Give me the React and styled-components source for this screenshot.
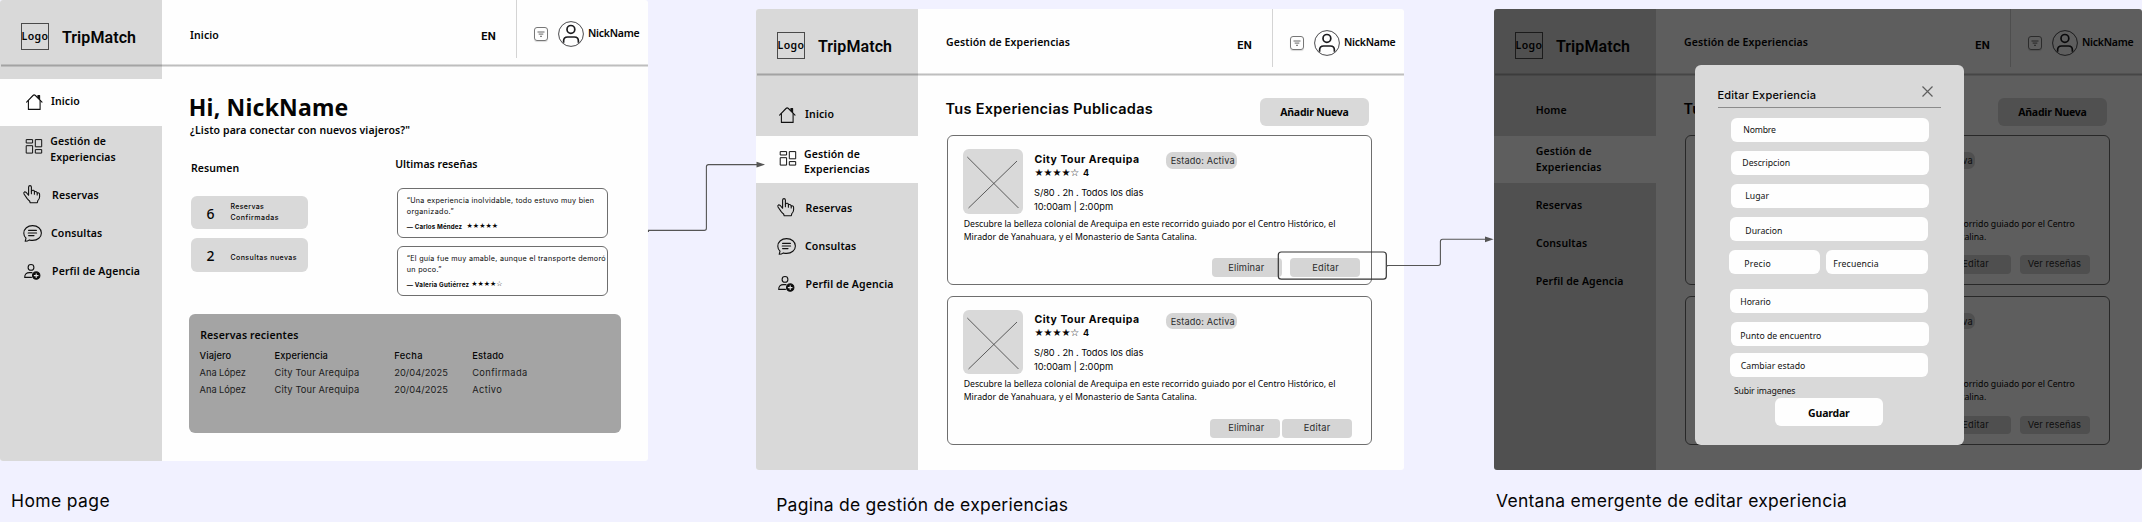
import React from "react";
import styled, { createGlobalStyle } from "styled-components";

const Global = createGlobalStyle`
  body { margin: 0; background: #f1f1ff; }
  * { box-sizing: border-box; }
`;

/* ---------- typography ---------- */
const Text = styled.div`
  flex: none;
  white-space: pre;
  color: ${(p) => p.$color || "#050505"};
  font-size: ${(p) => p.$size}px;
  font-weight: ${(p) => p.$weight || 400};
  line-height: ${(p) => p.$lh || 12}px;
  letter-spacing: ${(p) => p.$ls || 0}px;
  margin-top: ${(p) => p.$mt || 0}px;
  margin-left: ${(p) => p.$ml || 0}px;
  width: ${(p) => (p.$width ? p.$width + "px" : "auto")};
`;
const Humanist = styled(Text)`
  font-family: "Noto Sans", sans-serif;
`;
const Label = styled(Humanist).attrs({ $size: 10.5, $weight: 600 })``;
const Geo = styled(Text)`
  font-family: Inter, sans-serif;
`;
const Wordmark = styled(Text)`
  font-family: Roboto, sans-serif;
`;
const Stars = styled(Text)`
  font-family: "DejaVu Sans", sans-serif;
`;

/* ---------- board ---------- */
const Board = styled.main`
  position: relative;
  display: flex;
  width: 2142px;
  height: 522px;
  overflow: hidden;
  background: #f1f1ff;
`;
const Screen = styled.section`
  flex: none;
  width: 648px;
  margin-right: ${(p) => p.$gap || 0}px;
  padding-top: ${(p) => p.$top || 0}px;
`;
const Frame = styled.div`
  position: relative;
  display: flex;
  flex-direction: column;
  height: 461px;
  overflow: hidden;
  border-radius: 3px;
  background: #fefefe;
`;

/* ---------- top bar ---------- */
const TopBar = styled.header`
  position: relative;
  display: flex;
  flex: none;
  height: 67px;
  &::after {
    content: "";
    position: absolute;
    left: 1px;
    right: 0;
    bottom: 0;
    height: 3px;
    background: linear-gradient(rgba(0, 0, 0, 0.13) 33%, rgba(0, 0, 0, 0.25) 33% 66%, rgba(0, 0, 0, 0.13) 66%);
  }
`;
const Brand = styled.div`
  display: flex;
  flex: none;
  align-items: flex-start;
  width: 162.3px;
  background: #d9d9d9;
`;
const LogoBox = styled.div`
  display: flex;
  justify-content: center;
  width: 28px;
  height: 27px;
  margin: 23px 0 0 21px;
  border: 1px solid #4a4a4a;
`;
const Header = styled.div`
  display: flex;
  flex: 1;
  align-items: flex-start;
`;
const Divider = styled.div`
  width: 1px;
  height: 58px;
  background: #d4d4d4;
`;
const FilterButton = styled.div`
  display: flex;
  width: 14px;
  height: 14px;
  margin: 27px 0 0 17px;
  border: 1px solid #777;
  border-radius: 3px;
  box-shadow: 0 1px 1px rgba(0, 0, 0, 0.15);
`;
const AvatarSlot = styled.div`
  width: 26px;
  height: 26px;
  margin: 21px 0 0 10px;
`;

/* ---------- sidebar ---------- */
const Body = styled.div`
  display: flex;
  flex: 1;
`;
const Sidebar = styled.nav`
  flex: none;
  width: 162.3px;
  padding-top: ${(p) => p.$top || 0}px;
  background: #d9d9d9;
`;
const NavItem = styled.div`
  display: flex;
  align-items: flex-start;
  height: ${(p) => p.$h}px;
  background: ${(p) => (p.$active ? "#fefefe" : "transparent")};
`;
const IconSlot = styled.div`
  flex: none;
  width: 40px;
  padding: ${(p) => p.$top}px 0 0 ${(p) => p.$left}px;
  svg {
    display: block;
    overflow: visible;
  }
`;
const Content = styled.div`
  display: flex;
  flex: 1;
  flex-direction: column;
  align-items: flex-start;
`;

/* ---------- home ---------- */
const Split = styled.div`
  display: flex;
`;
const Column = styled.div`
  flex: none;
  width: ${(p) => p.$w}px;
  padding-top: ${(p) => p.$top}px;
`;
const StatCard = styled.div`
  display: flex;
  align-items: flex-start;
  width: 117.5px;
  height: 33.5px;
  margin-top: ${(p) => p.$mt}px;
  border-radius: 6px;
  background: #d9d9d9;
`;
const ReviewCard = styled.div`
  width: 211px;
  height: 49.5px;
  margin: ${(p) => p.$mt}px 0 0 1.6px;
  padding: 5.5px 0 0 9px;
  border: 1px solid #6e6e6e;
  border-radius: 6px;
`;
const Author = styled.div`
  display: flex;
  margin-top: 5.7px;
`;
const Panel = styled.div`
  width: 432.2px;
  height: 119px;
  margin: 18.3px 0 0 26.7px;
  padding-top: 15.2px;
  border-radius: 6px;
  background: #a4a4a4;
`;
const Table = styled.div`
  display: grid;
  grid-template-columns: 75px 119.6px 78px auto;
  margin: 6px 0 0 10.6px;
`;

/* ---------- experiences ---------- */
const TitleRow = styled.div`
  display: flex;
  align-items: flex-start;
  height: 50px;
`;
const Button = styled.div`
  display: flex;
  justify-content: center;
  width: 108.7px;
  height: 28px;
  margin: ${(p) => p.$mt}px 0 0 ${(p) => p.$ml || 0}px;
  border-radius: 6px;
  background: ${(p) => p.$bg || "#d9d9d9"};
`;
const Card = styled.article`
  width: 424.8px;
  height: 149.5px;
  margin: ${(p) => p.$mt}px 0 0 28.7px;
  padding-top: 13px;
  border: 1px solid #6e6e6e;
  border-radius: 6px;
`;
const CardTop = styled.div`
  display: flex;
  align-items: flex-start;
  height: 64.5px;
`;
const Thumb = styled.div`
  flex: none;
  width: 60.5px;
  height: 64.5px;
  margin-left: 15px;
  border-radius: 6px;
  background: #d9d9d9;
`;
const Info = styled.div`
  flex: none;
  width: 131.5px;
  margin-left: 11px;
`;
const Rating = styled.div`
  display: flex;
  margin-top: 1.2px;
`;
const Badge = styled.div`
  width: 71px;
  height: 16.5px;
  margin-top: 3px;
  padding: 3px 0 0 4.7px;
  border-radius: 6.5px;
  background: #d5d5d5;
`;
const Actions = styled.div`
  display: flex;
  gap: ${(p) => p.$gap}px;
  margin: ${(p) => p.$mt}px 0 0 ${(p) => p.$ml}px;
`;
const Action = styled.div`
  width: 70px;
  height: 18.5px;
  padding: ${(p) => p.$top}px 0 0 ${(p) => p.$pad}px;
  border-radius: 4px;
  background: #d5d5d5;
`;

/* ---------- modal ---------- */
const Overlay = styled.div`
  position: absolute;
  inset: 0;
  background: rgba(0, 0, 0, 0.63);
`;
const Modal = styled.div`
  position: absolute;
  left: 201px;
  top: 56.3px;
  display: flex;
  flex-direction: column;
  align-items: flex-start;
  width: 268.6px;
  height: 379.8px;
  border-radius: 6px;
  background: #d9d9d9;
`;
const ModalHead = styled.div`
  display: flex;
  align-items: flex-start;
  justify-content: space-between;
  width: 223px;
  height: 43px;
  margin-left: 23px;
  padding-right: 8px;
  border-bottom: 1px solid #8b8b8b;
`;
const CloseIcon = styled.svg`
  margin-top: 20.6px;
`;
const FieldRow = styled.div`
  display: flex;
  gap: 6px;
  margin: ${(p) => p.$mt}px 0 0 ${(p) => p.$ml}px;
`;
const Field = styled.div`
  width: ${(p) => p.$w || 198}px;
  height: 24px;
  padding: ${(p) => p.$top}px 0 0 ${(p) => p.$pad}px;
  border-radius: 6px;
  background: #fefefe;
`;

/* ---------- overlays on the board ---------- */
const Flow = styled.svg`
  position: absolute;
  left: 0;
  top: 0;
  pointer-events: none;
`;

/* ---------- icons ---------- */
const line = { fill: "none", stroke: "#111", strokeWidth: 1.1, strokeLinecap: "round", strokeLinejoin: "round" };
const icons = {
  home: (
    <svg width="17" height="17" viewBox="0 0 17 17" {...line}>
      <path d="M.6 8.2 7 1.5Q8.2.4 9.4 1.5L16 8.2" />
      <path d="M2.4 6.6V15.4H14.1V6.6" />
      <path d="M11.9 3.6V1.6H13.6V5.4" fill="#111" />
    </svg>
  ),
  grid: (
    <svg width="17" height="15" viewBox="0 0 17 15" {...line} strokeWidth="1">
      <rect x=".6" y=".6" width="6" height="3.4" />
      <rect x=".6" y="6.7" width="6" height="7.4" />
      <rect x="9.7" y=".6" width="6" height="7.2" />
      <rect x="9.7" y="10.6" width="6" height="3.5" />
    </svg>
  ),
  hand: (
    <svg width="18" height="19" viewBox="0 0 18 19" {...line}>
      <path d="M5.6 10.2V2Q5.7.6 7 .6T8.4 2V6.2Q9.2 4.9 10.4 5.3T11.4 6.8Q13.8 5.9 14.2 8Q16.8 7.4 16.6 9.6V12Q16.3 14.4 14.8 15.7L14.3 17.7H7.2L6.6 16Q5.2 14.9 4.2 13.6L1 9Q.4 7.3 1.5 6.9 2.8 6.6 4 8.3L5.6 10.2" />
      <path d="M8.4 6V8.8M11.4 6.8V9.2M14.2 8V10" />
    </svg>
  ),
  chat: (
    <svg width="19" height="17" viewBox="0 0 19 17" {...line}>
      <path d="M2.2 16.3 3 13.2Q.8 11 .8 8.2C.8 3.8 4.6.6 9.6.6S18.4 3.8 18.4 8 14.6 15.4 9.6 15.4Q7.8 15.4 6.4 14.9 4.6 16.3 2.2 16.3Z" />
      <path d="M5.6 5.4H13.4M5.2 8H13.6M5.6 10.6H11" />
    </svg>
  ),
  agent: (
    <svg width="17" height="16" viewBox="0 0 17 16" {...line}>
      <circle cx="7" cy="3.4" r="2.9" />
      <path d="M7.4 13.4H.7Q.6 8.6 5.6 8.6H8" />
      <circle cx="12.2" cy="11.6" r="3.7" fill="#0a0a0a" />
      <path d="M10.3 11.6H14.1M12.2 9.7V13.5" stroke="#e4e4e4" />
    </svg>
  ),
};

const FilterGlyph = () => (
  <svg width="12" height="12" viewBox="0 0 12 12" stroke="#555" strokeWidth=".9">
    <path d="M2.5 4H9.5M3.7 6.1H8.3M5 8.3H7" />
  </svg>
);
const Avatar = () => (
  <svg width="26" height="26" viewBox="0 0 26 26" fill="none" stroke="#1c1c1f">
    <circle cx="13" cy="13" r="12.4" strokeWidth=".8" />
    <circle cx="12.9" cy="8.4" r="3.9" strokeWidth="1.7" />
    <path d="M5.6 21.8V20Q5.6 16 9.6 16H16.4Q20.4 16 20.4 20V21.8" strokeWidth="1.7" />
  </svg>
);

/* ---------- shared parts ---------- */
function Bar({ crumb, crumbTop }) {
  return (
    <TopBar>
      <Brand>
        <LogoBox>
          <Humanist $size={10.5} $weight={600} $ls={0.45} $mt={6}>Logo</Humanist>
        </LogoBox>
        <Wordmark $size={16} $weight={600} $lh={20} $ls={0.085} $mt={27.5} $ml={12.9}>TripMatch</Wordmark>
      </Brand>
      <Header>
        <Label $mt={crumbTop} $ml={27.8} $width={291.2} $ls={0.09}>{crumb}</Label>
        <Geo $size={10.5} $weight={700} $mt={31} $width={34.6}>EN</Geo>
        <Divider />
        <FilterButton><FilterGlyph /></FilterButton>
        <AvatarSlot><Avatar /></AvatarSlot>
        <Label $mt={27.3} $ml={4.1} $ls={-0.25}>NickName</Label>
      </Header>
    </TopBar>
  );
}

function Nav({ items, top }) {
  return (
    <Sidebar $top={top}>
      {items.map((it) => (
        <NavItem key={it.label} $h={it.h} $active={it.active}>
          <IconSlot $left={it.il} $top={it.it}>{icons[it.icon]}</IconSlot>
          <Label $lh={15.6} $mt={it.lt + 0.8} $ml={it.x - 39.5} $ls={0.11}>{it.label}</Label>
        </NavItem>
      ))}
    </Sidebar>
  );
}

const MANAGE = "Gestión de\nExperiencias";
const homeNav = [
  { label: "Inicio", icon: "home", h: 47, il: 25.8, it: 15, x: 50.4, lt: 14.2, active: true },
  { label: MANAGE, icon: "grid", h: 47, il: 26, it: 12.5, x: 49.7, lt: 7.2 },
  { label: "Reservas", icon: "hand", h: 43, il: 22.8, it: 12, x: 51.6, lt: 13.9 },
  { label: "Consultas", icon: "chat", h: 34, il: 23, it: 8.8, x: 50.5, lt: 8.7 },
  { label: "Perfil de Agencia", icon: "agent", h: 43, il: 24, it: 14, x: 51.6, lt: 13.2 },
];
const manageNav = [
  { label: "Inicio", icon: "home", h: 60, il: 23.3, it: 31, x: 48.6, lt: 30.2 },
  { label: MANAGE, icon: "grid", h: 47, il: 24, it: 15, x: 47.5, lt: 9.9, active: true },
  { label: "Reservas", icon: "hand", h: 43, il: 20.8, it: 15, x: 49.1, lt: 16.7 },
  { label: "Consultas", icon: "chat", h: 34, il: 21, it: 11.8, x: 48.5, lt: 12.2 },
  { label: "Perfil de Agencia", icon: "agent", h: 43, il: 22, it: 16, x: 49.1, lt: 16.2 },
];
const dimNav = [
  { label: "Home", h: 60, il: 0, it: 0, x: 41.2, lt: 26.5 },
  { label: MANAGE, h: 47, il: 0, it: 0, x: 41.3, lt: 7.5, active: true },
  { label: "Reservas", h: 43, il: 0, it: 0, x: 41.2, lt: 14.2 },
  { label: "Consultas", h: 34, il: 0, it: 0, x: 41.4, lt: 9.2 },
  { label: "Perfil de Agencia", h: 43, il: 0, it: 0, x: 41.2, lt: 13.2 },
];

/* ---------- home screen ---------- */
function Review({ lines, ls, author, authorLs, stars, gap, mt }) {
  return (
    <ReviewCard $mt={mt}>
      {lines.map((t, i) => (
        <Geo key={t} $size={7.2} $lh={11} $ls={ls[i]}>{t}</Geo>
      ))}
      <Author>
        <Geo $size={6.2} $weight={700} $lh={9} $ls={authorLs}>{author}</Geo>
        <Stars $size={7} $lh={9} $ls={0} $ml={gap}>{stars}</Stars>
      </Author>
    </ReviewCard>
  );
}

const bookings = [
  ["Ana López", "City Tour Arequipa", "20/04/2025", "Confirmada"],
  ["Ana López", "City Tour Arequipa", "20/04/2025", "Activo"],
];
const headings = [["Viajero", 0.09], ["Experiencia", 0.12], ["Fecha", 0.35], ["Estado", 0.22]];
const cellSpacing = [-0.05, 0.14, 0.075, 0.4];

function HomeScreen() {
  return (
    <Frame>
      <Bar crumb="Inicio" crumbTop={29.2} />
      <Body>
        <Nav items={homeNav} top={12} />
        <Content>
          <Humanist $size={23} $weight={700} $lh={28} $ls={0.2} $mt={25.5} $ml={26.5}>Hi, NickName</Humanist>
          <Label $mt={3.5} $ml={27.8} $ls={0.097}>¿Listo para conectar con nuevos viajeros?"</Label>
          <Split>
            <Column $w={232.9} $top={25.5}>
              <Label $ml={28.7} $ls={0.068}>Resumen</Label>
              <Split>
                <Column $w={28.7} $top={0} />
                <div>
                  <StatCard $mt={22}>
                    <Humanist $size={14} $weight={500} $lh={16} $mt={10.4} $ml={15.5} $width={24}>6</Humanist>
                    <div>
                      <Geo $size={7} $weight={500} $lh={11} $mt={5.2} $ls={0.33}>Reservas</Geo>
                      <Geo $size={7} $weight={500} $lh={11} $ls={0.5}>Confirmadas</Geo>
                    </div>
                  </StatCard>
                  <StatCard $mt={9}>
                    <Humanist $size={14} $weight={500} $lh={16} $mt={10.4} $ml={15.5} $width={24}>2</Humanist>
                    <Geo $size={7} $weight={500} $lh={11} $mt={13.5} $ls={0.433}>Consultas nuevas</Geo>
                  </StatCard>
                </div>
              </Split>
            </Column>
            <Column $w={220} $top={21.5}>
              <Label $ls={0.02}>Ultimas reseñas</Label>
              <Review
                mt={18.5}
                lines={["“Una experiencia inolvidable, todo estuvo muy bien", "organizado.”"]}
                ls={[0.264, 0.375]}
                author="— Carlos Méndez"
                authorLs={0.15}
                stars="★★★★★"
                gap={4.4}
              />
              <Review
                mt={8.5}
                lines={["“El guía fue muy amable, aunque el transporte demoró", "un poco.”"]}
                ls={[0.275, 0.28]}
                author="— Valeria Gutiérrez"
                authorLs={0.217}
                stars="★★★★☆"
                gap={2}
              />
            </Column>
          </Split>
          <Panel>
            <Label $ml={11.2} $ls={0.15}>Reservas recientes</Label>
            <Table>
              {headings.map(([t, ls]) => (
                <Geo key={t} $size={9.3} $weight={500} $lh={17.2} $ls={ls}>{t}</Geo>
              ))}
              {bookings.flatMap((row, r) =>
                row.map((t, c) => (
                  <Geo key={r + t} $size={9.3} $lh={17.2} $ls={cellSpacing[c]} $color="#1c1c1c">{t}</Geo>
                ))
              )}
            </Table>
          </Panel>
        </Content>
      </Body>
    </Frame>
  );
}

/* ---------- experiences screen ---------- */
const firstActions = { ml: 264.5, mt: 15.4, gap: 8, top: 3.5, list: [["Eliminar", 15.7, 0.184], ["Editar", 21.7, 0.231]] };
const secondActions = { ml: 262, mt: 15.5, gap: 2, top: 2.7, list: [["Eliminar", 18.2, 0.184], ["Editar", 21.7, 0.231]] };
const dimActions = { ml: 255, mt: 12.3, gap: 9, top: 3.2, list: [["Editar", 21.2, 0.231], ["Ver reseñas", 7.8, 0.09]] };

function Experience({ mt, actions, textLeft, lines }) {
  return (
    <Card $mt={mt}>
      <CardTop>
        <Thumb>
          <svg width="60" height="64" viewBox="0 0 60 64" stroke="#4c4c4c" strokeWidth=".9">
            <path d="M4.3 8 55.5 59M54 12 5.5 59" />
          </svg>
        </Thumb>
        <Info>
          <Geo $size={10.5} $weight={700} $mt={4.8} $ls={0.48}>City Tour Arequipa</Geo>
          <Rating>
            <Stars $size={10} $ls={0}>★★★★☆</Stars>
            <Geo $size={9} $weight={700} $ml={3.6}>4</Geo>
          </Rating>
          <Geo $size={9.3} $mt={7.8} $ls={-0.064} $ml={-0.5}>S/80 . 2h . Todos los dias</Geo>
          <Geo $size={9.3} $mt={2.2} $ls={-0.04} $ml={-0.5}>10:00am | 2:00pm</Geo>
        </Info>
        <Badge>
          <Geo $size={9.2} $ls={0.141} $color="#2b2b2b">Estado: Activa</Geo>
        </Badge>
      </CardTop>
      <Humanist $size={8.7} $lh={13} $mt={4} $ml={textLeft} $ls={-0.015}>{lines[0]}</Humanist>
      <Humanist $size={8.7} $lh={13} $ml={textLeft} $ls={-0.01}>{lines[1]}</Humanist>
      <Actions $ml={actions.ml} $mt={actions.mt - 0.5} $gap={actions.gap}>
        {actions.list.map(([t, pad, ls]) => (
          <Action key={t} $pad={pad} $top={actions.top}>
            <Geo $size={9.3} $ls={ls} $color="#2b2b2b">{t}</Geo>
          </Action>
        ))}
      </Actions>
    </Card>
  );
}

const ABOUT = "Descubre la belleza colonial de Arequipa en este recorrido guiado por el Centro";
const ABOUT_END = "Mirador de Yanahuara, y el Monasterio de Santa Catalina.";

function Experiences({ nav, actions, textLeft, lines, children }) {
  return (
    <Frame>
      <Bar crumb="Gestión de Experiencias" crumbTop={27.4} />
      <Body>
        <Nav items={nav} />
        <Content>
          <TitleRow>
            <Geo $size={14.5} $weight={600} $lh={20} $mt={23} $ml={27.3} $width={314.5} $ls={0.27}>Tus Experiencias Publicadas</Geo>
            <Button $mt={22}>
              <Humanist $size={10.5} $weight={700} $mt={8} $ls={-0.24}>Añadir Nueva</Humanist>
            </Button>
          </TitleRow>
          <Experience mt={9} actions={actions[0]} textLeft={textLeft} lines={lines} />
          <Experience mt={11} actions={actions[1]} textLeft={textLeft} lines={lines} />
        </Content>
      </Body>
      {children}
    </Frame>
  );
}

/* ---------- edit dialog ---------- */
const fields = [
  { mt: 9.7, ml: 36, cells: [["Nombre", 5.7, 11.7, -0.2]] },
  { mt: 9, ml: 36, cells: [["Descripcion", 5.5, 10.7, 0]] },
  { mt: 9, ml: 36, cells: [["Lugar", 5.5, 13.7, 0]] },
  { mt: 9.5, ml: 35, cells: [["Duracion", 7, 14.7, 0]] },
  { mt: 9, ml: 34, cells: [["Precio", 7, 14.7, 0.25, 90.5], ["Frecuencia", 7, 7.2, 0.15, 102.5]] },
  { mt: 14.5, ml: 35, cells: [["Horario", 6.5, 9.7, -0.1]] },
  { mt: 9, ml: 36, cells: [["Punto de encuentro", 7.5, 8.7, 0]] },
  { mt: 7, ml: 35, cells: [["Cambiar estado", 7, 10.2, 0]] },
];

function EditDialog() {
  return (
    <Modal>
      <ModalHead>
        <Geo $size={11} $weight={500} $lh={14} $mt={22.7} $ml={-0.6} $ls={0.205}>Editar Experiencia</Geo>
        <CloseIcon width="11" height="11" viewBox="0 0 11 11" stroke="#5e5e5e" strokeWidth="1.2">
          <path d="M.5.5 10.5 10.5M10.5.5.5 10.5" />
        </CloseIcon>
      </ModalHead>
      {fields.map((row) => (
        <FieldRow key={row.cells[0][0]} $mt={row.mt} $ml={row.ml}>
          {row.cells.map(([t, top, pad, ls, w]) => (
            <Field key={t} $top={top + 0.5} $pad={pad + 0.6} $w={w}>
              <Humanist $size={8.7} $ls={ls} $color="#111">{t}</Humanist>
            </Field>
          ))}
        </FieldRow>
      ))}
      <Humanist $size={8.7} $mt={7.9} $ml={39} $ls={-0.15} $color="#111">Subir imagenes</Humanist>
      <Button $mt={1.1} $ml={79.5} $bg="#fefefe">
        <Humanist $size={10.5} $weight={700} $mt={9} $ls={-0.19}>Guardar</Humanist>
      </Button>
    </Modal>
  );
}

export default function App() {
  return (
    <>
      <Global />
      <Board>
        <Screen $gap={108}>
          <HomeScreen />
          <Geo $size={17.5} $lh={24} $mt={28} $ml={11} $ls={0.38}>Home page</Geo>
        </Screen>
        <Screen $top={9} $gap={90}>
          <Experiences
            nav={manageNav}
            actions={[firstActions, secondActions]}
            textLeft={15.7}
            lines={[ABOUT + " Histórico, el", ABOUT_END]}
          />
          <Geo $size={17.5} $lh={24} $mt={23} $ml={20.2} $ls={0.25}>Pagina de gestión de experiencias</Geo>
        </Screen>
        <Screen $top={9}>
          <Experiences nav={dimNav} actions={[dimActions, dimActions]} textLeft={67.2} lines={[ABOUT, ABOUT_END]}>
            <Overlay />
            <EditDialog />
          </Experiences>
          <Geo $size={17.5} $lh={24} $mt={19} $ml={2} $ls={0.27}>Ventana emergente de editar experiencia</Geo>
        </Screen>
        <Flow width="2142" height="522" viewBox="0 0 2142 522" fill="none" stroke="#555" strokeWidth="1.1">
          <path d="M648.5 232V230.4H704.2Q706.4 230.4 706.4 228.2V166.8Q706.4 164.6 708.6 164.6H757" />
          <path d="M756.5 161.8 765 164.6 756.5 167.6Z" fill="#555" stroke="none" />
          <rect x="1278.3" y="252" width="108" height="27.2" rx="3" stroke="#333" strokeWidth="1.2" />
          <path d="M1386.8 267V265.5H1438.2Q1440.4 265.5 1440.4 263.3V241.5Q1440.4 239.3 1442.6 239.3H1486" />
          <path d="M1485 236.4 1493.6 239.3 1485 242.2Z" fill="#555" stroke="none" />
        </Flow>
      </Board>
    </>
  );
}
